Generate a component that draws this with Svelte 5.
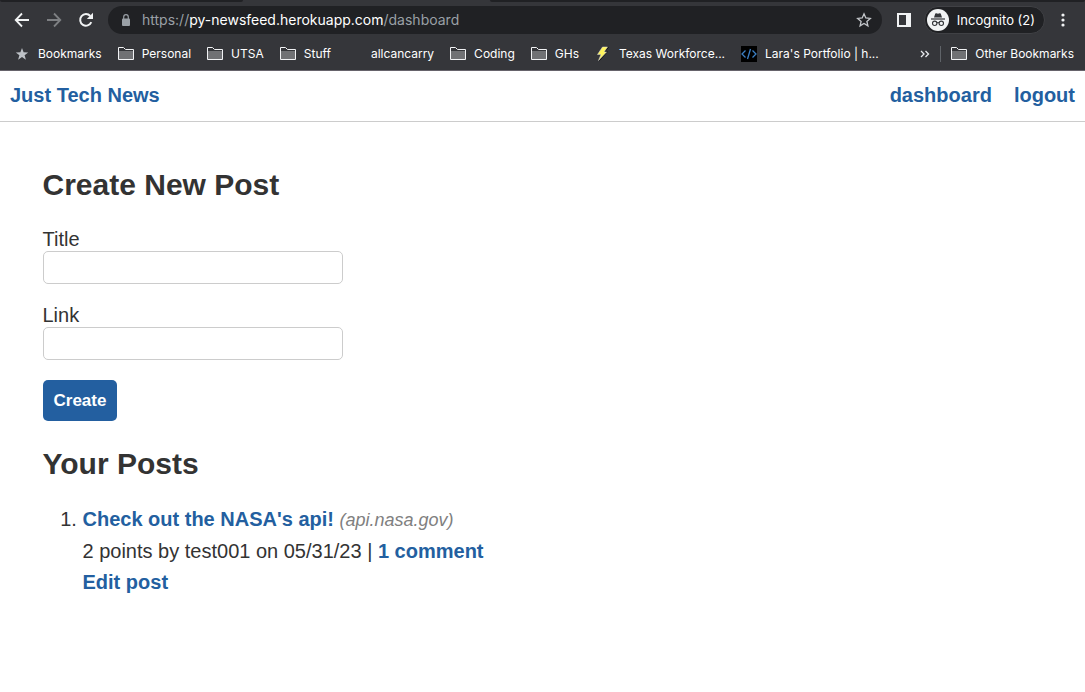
<script>
  let title = $state('');
  let link = $state('');

  const bookmarks = [
    { label: 'Bookmarks', icon: 'star' },
    { label: 'Personal', icon: 'folder' },
    { label: 'UTSA', icon: 'folder' },
    { label: 'Stuff', icon: 'folder' },
    { label: 'allcancarry', icon: 'blank' },
    { label: 'Coding', icon: 'folder' },
    { label: 'GHs', icon: 'folder' },
    { label: 'Texas Workforce...', icon: 'bolt' },
    { label: "Lara's Portfolio | h...", icon: 'code' }
  ];
</script>

{#snippet icon(name)}
  <svg class="icon" viewBox="0 0 16 16" aria-hidden="true">
    {#if name === 'folder'}
      <path d="M.5 13.500V1.500H5.500L7.500 3.500H15.500V13.500Z" fill="#343539" stroke="#f1f2f4" />
      <path d="M1 5H15V13H1Z" fill="#707174" />
    {:else if name === 'star'}
      <path d="M8 2 9.600 6.200 14.200 6.400 10.600 9.200 11.900 13.700 8 11.100 4.100 13.700 5.400 9.200 1.800 6.400 6.400 6.200Z" fill="#bdc1c6" />
    {:else if name === 'bolt'}
      <path d="M8 1H14L10.500 5.500H13L4 15.500 6.500 9H3.500Z" fill="#111" />
      <path d="M7.500 1H12.500L9 6H11.500L3.500 14.500 6 8.500H2.500Z" fill="#fff45c" stroke="#ddd" stroke-width=".5" />
    {:else if name === 'code'}
      <path d="M0 0H16V16H0Z" fill="#000" />
      <path d="M4.500 4.500 1 8 4.500 11.500M11.500 4.500 15 8 11.500 11.500M9.500 3 6.500 13" fill="none" stroke="#3c7fc4" stroke-width="1.300" />
    {/if}
  </svg>
{/snippet}

<div class="browser">
  <div class="tabs"><span></span><span class="active"></span><span></span></div>
  <div class="toolbar">
    <button class="tool" aria-label="Back">
      <svg viewBox="0 0 16 16"><path d="M15 8H2M8 1.500 1.700 8 8 14.500" fill="none" stroke="#f1f3f4" stroke-width="1.800" /></svg>
    </button>
    <button class="tool" aria-label="Forward">
      <svg viewBox="0 0 16 16"><path d="M1 8H14M8 1.500 14.300 8 8 14.500" fill="none" stroke="#7e8083" stroke-width="1.800" /></svg>
    </button>
    <button class="tool" aria-label="Reload">
      <svg viewBox="0 0 16 16"><path d="M13.300 10.200A5.800 5.800 0 1 1 12.300 4" fill="none" stroke="#f1f3f4" stroke-width="2" /><path d="M15 .8V7H8.800Z" fill="#f1f3f4" /></svg>
    </button>
    <div class="address">
      <svg class="lock" viewBox="0 0 10 12" aria-hidden="true"><rect x="1" y="4.500" width="8" height="7.500" rx="1" fill="#9aa0a6" /><path d="M2.700 5V3A2.300 2.300 0 0 1 7.300 3V5" fill="none" stroke="#9aa0a6" stroke-width="1.200" /></svg>
      <span class="url">https://<b>py-newsfeed.herokuapp.com</b>/dashboard</span>
      <button class="tool" aria-label="Bookmark this page">
        <svg viewBox="0 0 16 16"><path d="M8 1.800 9.800 6 14.300 6.400 10.900 9.400 11.900 13.800 8 11.500 4.100 13.800 5.100 9.400 1.700 6.400 6.200 6Z" fill="none" stroke="#c4c7cb" stroke-width="1.300" /></svg>
      </button>
    </div>
    <button class="tool panel" aria-label="Side panel">
      <svg viewBox="0 0 16 16"><path d="M1 1H15V15H1ZM3 3V13H10V3Z" fill="#f1f3f4" fill-rule="evenodd" /></svg>
    </button>
    <button class="incognito">
      <svg viewBox="0 0 22 22" aria-hidden="true">
        <circle cx="11" cy="11" r="11" fill="#f1f3f4" />
        <path d="M7 8.500 8.200 4.800Q8.500 4 9.300 4.300L11 4.700 12.700 4.300Q13.500 4 13.800 4.800L15 8.500Z" fill="#34363a" />
        <path d="M4 10H18" stroke="#34363a" stroke-width="1.200" />
        <g fill="none" stroke="#34363a" stroke-width="1.100"><circle cx="7.700" cy="14.300" r="2.200" /><circle cx="14.300" cy="14.300" r="2.200" /><path d="M9.900 14Q11 13 12.100 14" /></g>
      </svg>
      Incognito (2)
    </button>
    <button class="tool" aria-label="Menu">
      <svg viewBox="0 0 16 16" fill="#f1f3f4"><circle cx="8" cy="3" r="1.600" /><circle cx="8" cy="8" r="1.600" /><circle cx="8" cy="13" r="1.600" /></svg>
    </button>
  </div>
  <nav class="bookmarks" aria-label="Bookmarks">
    {#each bookmarks as item}
      <button class="bookmark">{@render icon(item.icon)}{item.label}</button>
    {/each}
    <button class="more" aria-label="More bookmarks">
      <svg viewBox="0 0 10 8"><path d="M1 1 4 4 1 7M5.500 1 8.500 4 5.500 7" fill="none" stroke="#e8eaed" stroke-width="1.300" /></svg>
    </button>
    <button class="bookmark other">{@render icon('folder')}Other Bookmarks</button>
  </nav>
</div>

<header class="site">
  <a class="brand" href="/">Just Tech News</a>
  <nav>
    <a href="/dashboard">dashboard</a>
    <a href="/logout">logout</a>
  </nav>
</header>

<main>
  <section>
    <h2>Create New Post</h2>
    <form onsubmit={(e) => e.preventDefault()}>
      <div class="field">
        <label for="post-title">Title</label>
        <input id="post-title" type="text" bind:value={title} />
      </div>
      <div class="field">
        <label for="post-link">Link</label>
        <input id="post-link" type="text" bind:value={link} />
      </div>
      <button class="create" type="submit">Create</button>
    </form>
  </section>
  <section>
    <h2>Your Posts</h2>
    <ol>
      <li>
        <div class="line"><a href="https://api.nasa.gov">Check out the NASA's api!</a> <span class="source">(api.nasa.gov)</span></div>
        <div class="line">2 points by test001 on 05/31/23 | <a href="/post/1">1 comment</a></div>
        <div class="line"><a href="/dashboard/edit/1">Edit post</a></div>
      </li>
    </ol>
  </section>
</main>

<style>
  :global(body) {
    background: #fff;
    color: #333;
    font-family: "Liberation Sans", Helvetica, Arial, sans-serif;
    font-size: 20px;
    line-height: 30px;
  }
  button {
    border: 0;
    padding: 0;
    background: none;
    color: inherit;
    font: inherit;
  }
  svg { display: block; flex: none; }
  a { color: #235fa0; font-weight: bold; text-decoration: none; }

  .browser {
    background: #35363a;
    border-bottom: 1px solid #66636b;
    color: #fff;
    font: 400 12px/16px Inter, sans-serif;
  }
  .tabs { display: grid; grid-template-columns: 243px 247px 1fr; height: 2px; background: #35363a; }
  .tabs span { background: #202124; border-radius: 0 0 2px 2px; }
  .tabs .active { background: #35363a; }
  .toolbar {
    display: flex;
    align-items: center;
    padding: 4px 14px 4px;
    gap: 16px;
  }
  .tool svg { width: 16px; height: 16px; }
  .address {
    flex: 1;
    display: flex;
    align-items: center;
    height: 28px;
    margin-left: -2px;
    padding: 0 10px 0 13px;
    border-radius: 14px;
    background: #202124;
    box-sizing: border-box;
    font-size: 14px;
    color: #9aa0a6;
  }
  .lock { width: 10px; height: 12px; margin-right: 11px; }
  .url { flex: 1; }
  .url b { font-weight: 400; color: #fff; }
  .panel { margin-right: -4px; margin-left: -2px; }
  .incognito {
    display: flex;
    align-items: center;
    gap: 8px;
    height: 28px;
    padding: 0 9px 0 2px;
    border: 1px solid #404145;
    border-radius: 14px;
    background: #202124;
    box-sizing: border-box;
    font-size: 13px;
    margin-right: -6px;
  }
  .incognito svg { width: 22px; height: 22px; }
  .bookmarks {
    display: flex;
    align-items: center;
    gap: 16px;
    height: 32px;
    padding: 0 11px 0 14px;
    white-space: nowrap;
  }
  .bookmark { display: flex; align-items: center; gap: 8px; }
  .icon { width: 16px; height: 16px; }
  .more { margin-left: auto; margin-right: -6px; }
  .more svg { width: 10px; height: 8px; }
  .other { border-left: 1px solid #5f6368; padding-left: 10px; }

  .site {
    display: flex;
    justify-content: space-between;
    padding: 9px 10px 11px;
    border-bottom: 1px solid #ccc;
  }
  .site nav { display: flex; gap: 22px; }

  main { max-width: 1000px; margin: 0 auto; padding: 40px 20px; }
  h2 { margin: 0; font-size: 30px; line-height: 46px; }
  form { padding: 20px 0; }
  .field { display: flex; flex-direction: column; align-items: flex-start; margin-bottom: 20px; }
  label { line-height: 23px; }
  input {
    width: 300px;
    max-width: 100%;
    height: 33px;
    padding: 5px;
    border: 1px solid #ccc;
    border-radius: 5px;
    box-sizing: border-box;
    font: inherit;
  }
  .create {
    display: block;
    padding: 9px 11px;
    border-radius: 5px;
    background: #235fa0;
    color: #fff;
    font-size: 17px;
    font-weight: bold;
    line-height: 23px;
  }
  ol { margin: 17px 0 0; padding-left: 40px; }
  .line { line-height: 31px; }
  .source { color: #808080; font-size: 18px; font-style: italic; }
</style>
